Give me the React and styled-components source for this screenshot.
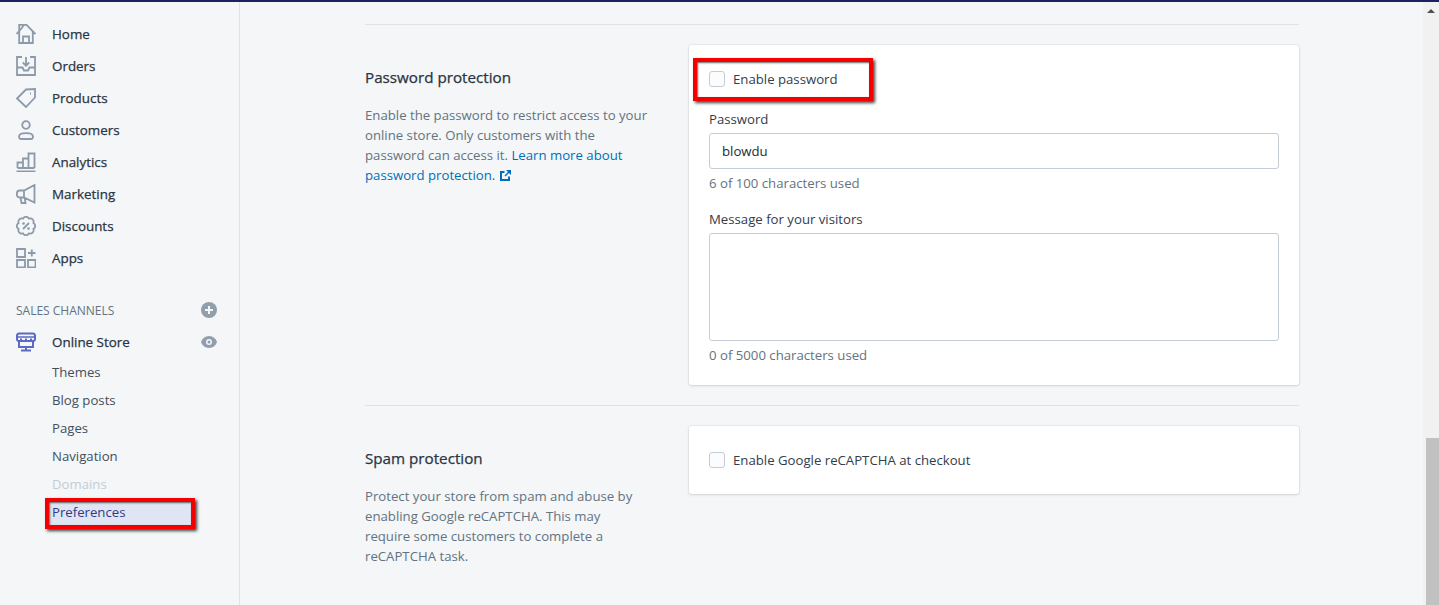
import styled, { createGlobalStyle } from 'styled-components'

const GlobalStyle = createGlobalStyle`
    html, body {
        margin: 0;
        height: 605px;
        overflow: hidden;
        background: #f4f6f8;
    }
    body {
        font-family: "Open Sans", "Noto Sans", "Liberation Sans", sans-serif;
        font-size: 13.2px;
        color: #212b36;
    }
    * { box-sizing: border-box; }
`

const Page = styled.div`
    height: 605px;
    border-top: 2px solid #1c2260;
    display: flex;
    overflow: hidden;
`

const Sidebar = styled.nav`
    width: 240px;
    flex-shrink: 0;
    border-right: 1px solid #dfe3e8;
    padding-top: 16px;
    display: flex;
    flex-direction: column;
`

const NavRow = styled.div`
    height: 32px;
    display: flex;
    align-items: center;
    padding-left: 16px;
    gap: 16px;
    font-weight: 500;
    font-size: 13.4px;
    color: #2a3442;
    -webkit-text-stroke: 0.25px #2a3442;
    svg { flex-shrink: 0; }
`

const ChannelHeader = styled.div`
    margin-top: 20px;
    height: 32px;
    padding: 0 22px 0 16px;
    display: flex;
    align-items: center;
    justify-content: space-between;
    font-size: 12px;
    color: #637381;
`

const StoreRow = styled(NavRow)`
    padding-right: 22px;
    span { flex: 1; }
`

const SubList = styled.div`
    display: flex;
    flex-direction: column;
`

const SubItem = styled.div`
    height: 28px;
    display: flex;
    align-items: center;
    padding-left: 52px;
    font-size: 13.2px;
    color: ${(props) => (props.$disabled ? '#c4cdd5' : '#454f5b')};
`

const ActiveItem = styled(SubItem)`
    position: relative;
    margin-left: 45px;
    margin-right: 44px;
    padding-left: 7px;
    background: #e0e5f3;
    color: #2f3b8c;
    font-weight: 500;
`

const Highlight = styled.div`
    position: absolute;
    border: 4px solid #f50000;
    box-shadow: 2px 2px 3px rgba(0, 0, 0, 0.75), inset 1px 1px 2px rgba(0, 0, 0, 0.6);
    pointer-events: none;
`

const PrefHighlight = styled(Highlight)`
    inset: 0 0 -3px 0;
`

const CheckHighlight = styled(Highlight)`
    left: -16px;
    top: -7px;
    width: 180px;
    height: 43px;
`

const Main = styled.main`
    flex: 1;
    padding: 22px 124px 0 125px;
`

const Divider = styled.div`
    height: 1px;
    background: #dfe3e8;
`

const Section = styled.section`
    display: grid;
    grid-template-columns: 324px 610px;
    padding: 20px 0;
`

const Intro = styled.div`
    padding-top: 20px;
`

const Heading = styled.h2`
    margin: 0 0 16px;
    font-size: 15.2px;
    line-height: 24px;
    font-weight: 500;
    color: #2a3442;
    -webkit-text-stroke: 0.25px #2a3442;
`

const Description = styled.p`
    margin: 0;
    width: 283px;
    font-size: 13.2px;
    line-height: 20px;
    color: #637381;
`

const DocLink = styled.a`
    color: #006fbb;
    svg {
        margin-left: 5px;
        vertical-align: -1px;
    }
`

const Card = styled.div`
    align-self: start;
    background: #fff;
    border-radius: 3px;
    box-shadow: 0 0 0 1px rgba(63, 63, 68, 0.05), 0 1px 3px 0 rgba(63, 63, 68, 0.15);
    padding: 20px;
`

const CheckRow = styled.label`
    position: relative;
    height: 28px;
    display: flex;
    align-items: center;
    gap: 8px;
    color: #333c4a;
`

const CheckBox = styled.span`
    width: 16px;
    height: 16px;
    background: #fbfcfd;
    border: 1px solid #c4cdd5;
    border-radius: 3px;
`

const Field = styled.div`
    margin-top: 16px;
`

const Label = styled.div`
    height: 20px;
    line-height: 20px;
    margin-bottom: 4px;
    color: #333c4a;
`

const TextInput = styled.div`
    height: 36px;
    padding: 0 12px;
    display: flex;
    align-items: center;
    border: 1px solid #c4cdd5;
    border-radius: 3px;
    color: #212b36;
`

const TextArea = styled.div`
    height: 108px;
    border: 1px solid #c4cdd5;
    border-radius: 3px;
`

const Help = styled.div`
    margin-top: 4px;
    line-height: 20px;
    color: #637381;
`

const ScrollTrack = styled.div`
    width: 16px;
    flex-shrink: 0;
    background: #f1f1f1;
    display: flex;
    flex-direction: column;
    align-items: center;
`

const ScrollArrow = styled.div`
    margin-top: 7px;
    width: 0;
    height: 0;
    border-left: 4px solid transparent;
    border-right: 4px solid transparent;
    border-bottom: 4px solid #505050;
`

const ScrollThumb = styled.div`
    margin-top: auto;
    width: 13px;
    margin-left: 2px;
    height: 167px;
    background: #c1c1c1;
`

const Stroke = (props) => (
    <svg width="20" height="20" viewBox="0 0 20 20" fill="none" stroke="#8c9aab" strokeWidth="1.8" {...props} />
)

const icons = {
    Home: (
        <Stroke>
            <path d="M.6 10 3.200 7.200V.8h7.300l9 9.200M3.200 7.200 8 1M3.200 7.200V19h13.600V8M7 19v-6.500h6V19" />
        </Stroke>
    ),
    Orders: (
        <Stroke>
            <path d="M6 1H1v18h18V1h-5M1 11.500h5.500l1.500 3h4l1.500-3H19M10 1v8.500M6.800 6.500l3.200 3.200 3.200-3.200" />
        </Stroke>
    ),
    Products: (
        <Stroke>
            <path d="M1 10.500 10 1.500l9-.5v8.500L10 19zM14 5.500h1" />
        </Stroke>
    ),
    Customers: (
        <Stroke>
            <circle cx="10" cy="5" r="3.800" />
            <path d="M3 16.500C3 12 17 12 17 16.500c0 1.500-1 2.500-2 2.500H5c-1 0-2-1-2-2.500z" />
        </Stroke>
    ),
    Analytics: (
        <Stroke>
            <path d="M.5 19.300h19M1.500 16V10.500h5.500V16M7 16V6.500h5.500V16M12.500 16V1.500h6V16M1.500 16h17" />
        </Stroke>
    ),
    Marketing: (
        <Stroke>
            <path d="M18.500 1 8 6.500H3.500C1.500 6.500.8 8.500.8 10s.7 3.500 2.700 3.500H8L18.500 18.500zM8 6.500v7M4.500 13.500l1 5.500h4l-.8-4.800" />
        </Stroke>
    ),
    Discounts: (
        <Stroke>
            <path d="M17.400 13A3.400 3.400 0 0 1 13 17.400 3.400 3.400 0 0 1 7 17.400 3.400 3.400 0 0 1 2.600 13 3.400 3.400 0 0 1 2.600 7 3.400 3.400 0 0 1 7 2.600 3.400 3.400 0 0 1 13 2.600 3.400 3.400 0 0 1 17.400 7 3.400 3.400 0 0 1 17.400 13z" />
            <path d="M13 7l-6 6" />
            <circle cx="7.500" cy="7.500" r="1.300" fill="#8c9aab" stroke="none" />
            <circle cx="12.500" cy="12.500" r="1.300" fill="#8c9aab" stroke="none" />
        </Stroke>
    ),
    Apps: (
        <Stroke>
            <path d="M1 1h8v8H1zM1 12h8v7.500H1zM12 12h7.500v7.500H12zM15.800 1.500v7M12 5h7.500" />
        </Stroke>
    ),
}

const navItems = ['Home', 'Orders', 'Products', 'Customers', 'Analytics', 'Marketing', 'Discounts', 'Apps']

export default function App() {
    return (
        <Page>
            <GlobalStyle />
            <Sidebar>
                {navItems.map((name) => (
                    <NavRow key={name}>
                        {icons[name]}
                        <span>{name}</span>
                    </NavRow>
                ))}
                <ChannelHeader>
                    <span>SALES CHANNELS</span>
                    <svg width="16" height="16" viewBox="0 0 16 16">
                        <circle cx="8" cy="8" r="8" fill="#919eab" />
                        <path d="M8 4v8M4 8h8" stroke="#f4f6f8" strokeWidth="2" />
                    </svg>
                </ChannelHeader>
                <StoreRow>
                    <svg width="20" height="20" viewBox="0 0 20 20" fill="none" stroke="#5c6ac4" strokeWidth="2">
                        <path d="M3 1.500h14c1 0 2 1 2 2.500v3c0 1-1 2-2 2H3C2 9 1 8 1 7V4c0-1.500 1-2.500 2-2.500z" />
                        <path d="M3 9v6h14V9M10 15v3.500M5 18.500h10" />
                        <path d="M1.500 5h17" strokeWidth="1.500" />
                        <path d="M4 7.500h2M9 7.500h2M14 7.500h2" strokeWidth="2" />
                    </svg>
                    <span>Online Store</span>
                    <svg width="16" height="12" viewBox="0 0 16 12">
                        <path d="M8 0c4 0 7 3 8 6-1 3-4 6-8 6S1 9 0 6c1-3 4-6 8-6z" fill="#919eab" />
                        <circle cx="8" cy="6" r="3" fill="#f4f6f8" />
                        <circle cx="8" cy="6" r="1.500" fill="#919eab" />
                    </svg>
                </StoreRow>
                <SubList>
                    <SubItem>Themes</SubItem>
                    <SubItem>Blog posts</SubItem>
                    <SubItem>Pages</SubItem>
                    <SubItem>Navigation</SubItem>
                    <SubItem $disabled>Domains</SubItem>
                    <ActiveItem>
                        Preferences
                        <PrefHighlight />
                    </ActiveItem>
                </SubList>
            </Sidebar>
            <Main>
                <Divider />
                <Section>
                    <Intro>
                        <Heading>Password protection</Heading>
                        <Description>
                            Enable the password to restrict access to your online store. Only customers with the
                            password can access it.{' '}
                            <DocLink>Learn more about</DocLink>{' '}
                            <DocLink>
                                password protection.
                                <svg width="11" height="11" viewBox="0 0 11 11">
                                    <path d="M0 1h4.500v2H2v6h6V6.500h2V11H0zM6 0h5v5L9 3 5.500 6.500 4.500 5.500 8 2z" fill="#006fbb" />
                                </svg>
                            </DocLink>
                        </Description>
                    </Intro>
                    <Card>
                        <CheckRow>
                            <CheckBox />
                            Enable password
                            <CheckHighlight />
                        </CheckRow>
                        <Field>
                            <Label>Password</Label>
                            <TextInput>blowdu</TextInput>
                            <Help>6 of 100 characters used</Help>
                        </Field>
                        <Field>
                            <Label>Message for your visitors</Label>
                            <TextArea />
                            <Help>0 of 5000 characters used</Help>
                        </Field>
                    </Card>
                </Section>
                <Divider />
                <Section>
                    <Intro>
                        <Heading>Spam protection</Heading>
                        <Description>
                            Protect your store from spam and abuse by enabling Google reCAPTCHA. This may require
                            some customers to complete a reCAPTCHA task.
                        </Description>
                    </Intro>
                    <Card>
                        <CheckRow>
                            <CheckBox />
                            Enable Google reCAPTCHA at checkout
                        </CheckRow>
                    </Card>
                </Section>
            </Main>
            <ScrollTrack>
                <ScrollArrow />
                <ScrollThumb />
            </ScrollTrack>
        </Page>
    )
}
